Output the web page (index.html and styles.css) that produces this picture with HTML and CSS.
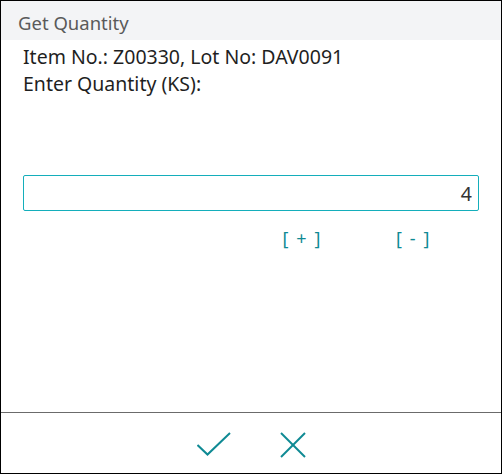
FILE: index.html
```html
<!DOCTYPE html>
<html lang="en">
<head>
    <meta charset="UTF-8">
    <title>Get Quantity</title>
    <link rel="stylesheet" href="styles.css">
</head>
<body>
    <div class="dialog">
        <div class="dialog-header">Get Quantity</div>

        <div class="dialog-content">
            <div class="info-line">Item No.: Z00330, Lot No: DAV0091</div>
            <div class="info-line">Enter Quantity (KS):</div>

            <input class="qty-input" type="text" value="4">

            <div class="qty-actions">
                <span class="qty-btn">[ + ]</span>
                <span class="qty-btn">[ - ]</span>
            </div>
        </div>

        <div class="dialog-footer">
            <!-- OK -->
            <svg class="icon" width="34" height="26" viewBox="0 0 34 26">
                <polyline points="0.5,13 10.5,22.5 33,1" fill="none" stroke="#0f8a94" stroke-width="2"/>
            </svg>
            <!-- Cancel -->
            <svg class="icon" width="26" height="26" viewBox="0 0 26 26">
                <line x1="1" y1="1" x2="25" y2="25" stroke="#0f8a94" stroke-width="2"/>
                <line x1="25" y1="1" x2="1" y2="25" stroke="#0f8a94" stroke-width="2"/>
            </svg>
        </div>
    </div>
</body>
</html>
```

FILE: styles.css
```css
/* Basic layout */
body {
    margin: 0;
    padding: 0;
    font-family: "Noto Sans", "Open Sans", sans-serif;
    background-color: #fff;
}

.dialog {
    width: 502px;
    height: 474px;
    box-sizing: border-box;
    border: 1px solid #000;
    display: flex;
    flex-direction: column;
}

.dialog-header {
    height: 39px;
    box-sizing: border-box;
    padding: 4px 0 0 17px;
    line-height: 35px;
    background-color: #f3f4f6;
    color: #5a5a5a;
    font-size: 18.5px;
}

.dialog-content {
    flex: 1;
    padding: 3px 22px 0 22px;
}

.info-line {
    font-size: 19.5px;
    line-height: 27px;
    color: #1f1f1f;
}

.qty-input {
    display: block;
    width: 100%;
    height: 36px;
    box-sizing: border-box;
    margin-top: 78px;
    padding: 0 6px;
    border: 1px solid #14aebb;
    border-radius: 2px;
    text-align: right;
    font-family: inherit;
    font-size: 19.5px;
    color: #333;
    outline: none;
}

.qty-actions {
    display: flex;
    justify-content: flex-end;
    gap: 74px;
    padding-right: 48px;
    margin-top: 15px;
}

.qty-btn {
    color: #0f8a94;
    font-size: 18px;
    letter-spacing: 1.6px;
    cursor: pointer;
}

.dialog-footer {
    height: 61px;
    border-top: 1px solid #6b6b6b;
    display: flex;
    justify-content: center;
    align-items: center;
    gap: 49px;
    padding-top: 3px;
    box-sizing: border-box;
}

.icon {
    display: block;
    cursor: pointer;
}
```
